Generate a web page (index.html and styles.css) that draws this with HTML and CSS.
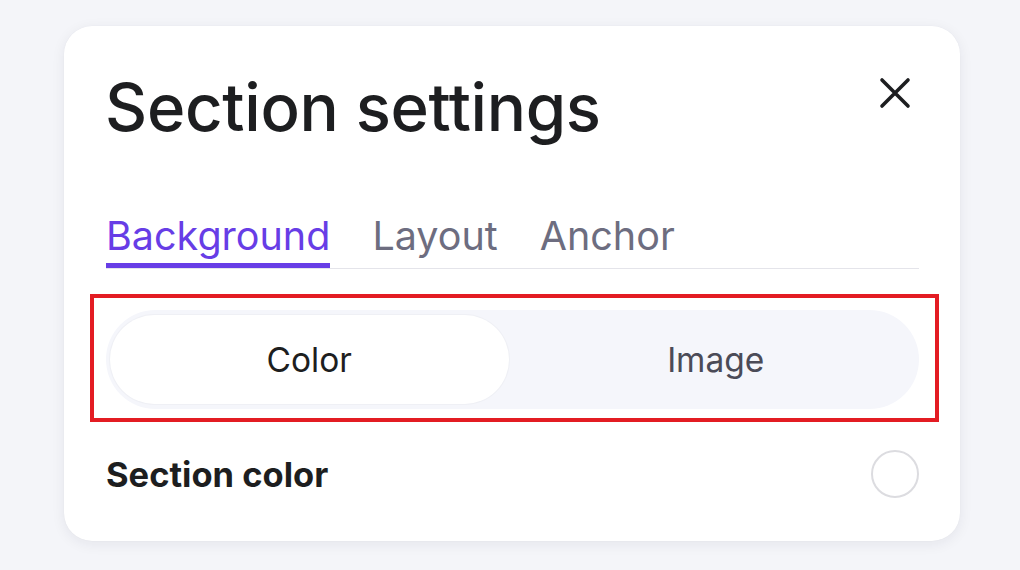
FILE: index.html
```html
<!DOCTYPE html>
<html>
<head>
<meta charset="utf-8">
<link rel="stylesheet" href="styles.css">
</head>
<body>
<div class="card">
  <div class="header">
    <h1 class="title">Section settings</h1>
    <button class="close" aria-label="Close">
      <svg width="32" height="32" viewBox="0 0 32 32"><path d="M3 3 L29 29 M29 3 L3 29" stroke="#1d1e20" stroke-width="3.6" stroke-linecap="round" fill="none"/></svg>
    </button>
  </div>
  <div class="tabs">
    <div class="tab active">Background</div>
    <div class="tab">Layout</div>
    <div class="tab">Anchor</div>
  </div>
  <div class="highlight">
    <div class="segment">
      <div class="seg active">Color</div>
      <div class="seg">Image</div>
    </div>
  </div>
  <div class="row">
    <div class="label">Section color</div>
    <div class="swatch"></div>
  </div>
</div>
</body>
</html>
```
FILE: styles.css
```css
html, body {
  margin: 0;
  padding: 0;
}
body {
  background: #f4f5f9;
  font-family: Inter, "Noto Sans", sans-serif;
  color: #1d1e20;
  width: 1020px;
  height: 570px;
  overflow: hidden;
}
.card {
  box-sizing: border-box;
  margin: 26px 0 0 64px;
  width: 896px;
  height: 515px;
  background: #fff;
  border-radius: 28px;
  box-shadow: 0 3px 14px rgba(30, 30, 60, 0.07), 0 0 1px rgba(30, 30, 60, 0.08);
  padding: 42px 41px 0 42px;
}
.header {
  display: flex;
  justify-content: space-between;
  align-items: flex-start;
}
.title {
  margin: 0 0 0 -1px;
  font-size: 65.3px;
  font-weight: 500;
  line-height: 80px;
  letter-spacing: -0.3px;
}
.close {
  border: none;
  background: none;
  padding: 0;
  margin: 9px 8px 0 0;
  width: 32px;
  height: 32px;
  cursor: pointer;
}
.close svg { display: block; }
.tabs {
  display: flex;
  align-items: flex-end;
  gap: 42px;
  border-bottom: 1.5px solid #e4e4ea;
  margin-top: 64px;
}
.tab {
  font-size: 39.5px;
  font-weight: 400;
  color: #6d6d80;
  line-height: 48px;
  padding-bottom: 8px;
}
.tab.active {
  color: #673de6;
  padding-bottom: 3px;
  border-bottom: 5px solid #673de6;
}
.highlight {
  margin: 25px -20px 0 -16px;
  border: 4px solid #e31c23;
  padding: 12px 16px 9px 12px;
  height: 128px;
  box-sizing: border-box;
}
.segment {
  display: flex;
  background: #f5f6fb;
  border-radius: 50px;
  height: 99px;
  padding: 5px 4px;
  box-sizing: border-box;
}
.seg {
  flex: 1;
  display: flex;
  align-items: center;
  justify-content: center;
  font-size: 33.5px;
  color: #4b4b57;
  border-radius: 45px;
}
.seg.active {
  background: #fff;
  color: #1d1e20;
  box-shadow: 0 0 0 1px #eff0f5;
  margin-right: 8px;
}
.row {
  display: flex;
  justify-content: space-between;
  align-items: center;
  margin-top: 28px;
  height: 48px;
}
.label {
  font-size: 34.5px;
  font-weight: 700;
  line-height: 48px;
  color: #1d1e20;
  padding-top: 2px;
}
.swatch {
  width: 48px;
  height: 48px;
  border-radius: 50%;
  border: 2px solid #dcdce0;
  box-sizing: border-box;
}
```
